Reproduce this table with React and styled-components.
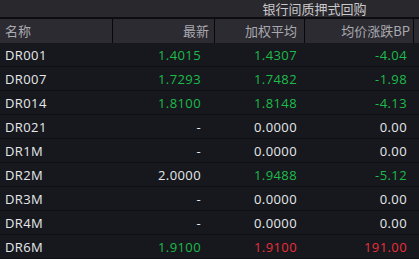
import React from "react";
import styled, { createGlobalStyle } from "styled-components";

const Global = createGlobalStyle`
  html, body { margin: 0; padding: 0; background: #16181d; overflow: hidden; }
  body { font-family: "Open Sans", "Noto Sans CJK SC", sans-serif; }
`;

const Panel = styled.div`
  width: 419px;
  height: 259px;
  overflow: hidden;
  background: #16181d;
  font-size: 13px;
`;

const Grid = styled.div`
  display: grid;
  grid-template-columns: 113px 102px 90px 109px 40px;
  width: 454px;
`;

const GroupTitle = styled.div`
  grid-column: ${(p) => p.$span};
  height: 17px;
  background: #29282d;
  border-bottom: 2px solid #0d0d10;
  color: #c9c9cc;
  font-family: "Noto Sans CJK SC", sans-serif;
  font-size: 13px;
  line-height: 17px;
  text-align: center;
`;

const HeadCell = styled.div`
  height: 24px;
  box-sizing: border-box;
  background: #2c2b31;
  border-right: 1px solid #08080a;
  color: #a9a9b0;
  font-family: "Noto Sans CJK SC", sans-serif;
  font-size: 13px;
  line-height: 24px;
  padding-left: ${(p) => (p.$left ? "5px" : "0")};
  padding-right: ${(p) => (p.$left ? "0" : p.$pr || "4px")};
  text-align: ${(p) => (p.$left ? "left" : "right")};
  white-space: nowrap;
  overflow: hidden;
`;

const Cell = styled.div`
  height: 24px;
  box-sizing: border-box;
  border-bottom: 1px solid #0f1014;
  padding-top: 2px;
  line-height: 21px;
  letter-spacing: 0.4px;
  color: ${(p) => p.$color};
  text-align: ${(p) => (p.$left ? "left" : "right")};
  padding-left: ${(p) => (p.$left ? "5px" : "0")};
  padding-right: ${(p) => p.$pr || "0"};
  white-space: nowrap;
`;

const WHITE = "#e6e8ec";
const GREEN = "#1dbb4a";
const RED = "#ea2f3a";

const rows = [
  ["DR001", "1.4015", GREEN, "1.4307", GREEN, "-4.04", GREEN],
  ["DR007", "1.7293", GREEN, "1.7482", GREEN, "-1.98", GREEN],
  ["DR014", "1.8100", GREEN, "1.8148", GREEN, "-4.13", GREEN],
  ["DR021", "-", WHITE, "0.0000", WHITE, "0.00", WHITE],
  ["DR1M", "-", WHITE, "0.0000", WHITE, "0.00", WHITE],
  ["DR2M", "2.0000", WHITE, "1.9488", GREEN, "-5.12", GREEN],
  ["DR3M", "-", WHITE, "0.0000", WHITE, "0.00", WHITE],
  ["DR4M", "-", WHITE, "0.0000", WHITE, "0.00", WHITE],
  ["DR6M", "1.9100", GREEN, "1.9100", RED, "191.00", RED],
];

export default function App() {
  return (
    <Panel>
      <Global />
      <Grid>
        <GroupTitle $span="1 / 3" />
        <GroupTitle $span="3 / 5">银行间质押式回购</GroupTitle>
        <GroupTitle $span="5 / 6" />
        <HeadCell $left>名称</HeadCell>
        <HeadCell $pr="5px">最新</HeadCell>
        <HeadCell $pr="7px">加权平均</HeadCell>
        <HeadCell $pr="3px">均价涨跌BP</HeadCell>
        <HeadCell $left>成交量</HeadCell>
        {rows.map((r) => (
          <React.Fragment key={r[0]}>
            <Cell $left $color={WHITE}>{r[0]}</Cell>
            <Cell $color={r[2]} $pr="14px">{r[1]}</Cell>
            <Cell $color={r[4]} $pr="8px">{r[3]}</Cell>
            <Cell $color={r[6]} $pr="7px">{r[5]}</Cell>
            <Cell $color={WHITE} />
          </React.Fragment>
        ))}
      </Grid>
    </Panel>
  );
}
